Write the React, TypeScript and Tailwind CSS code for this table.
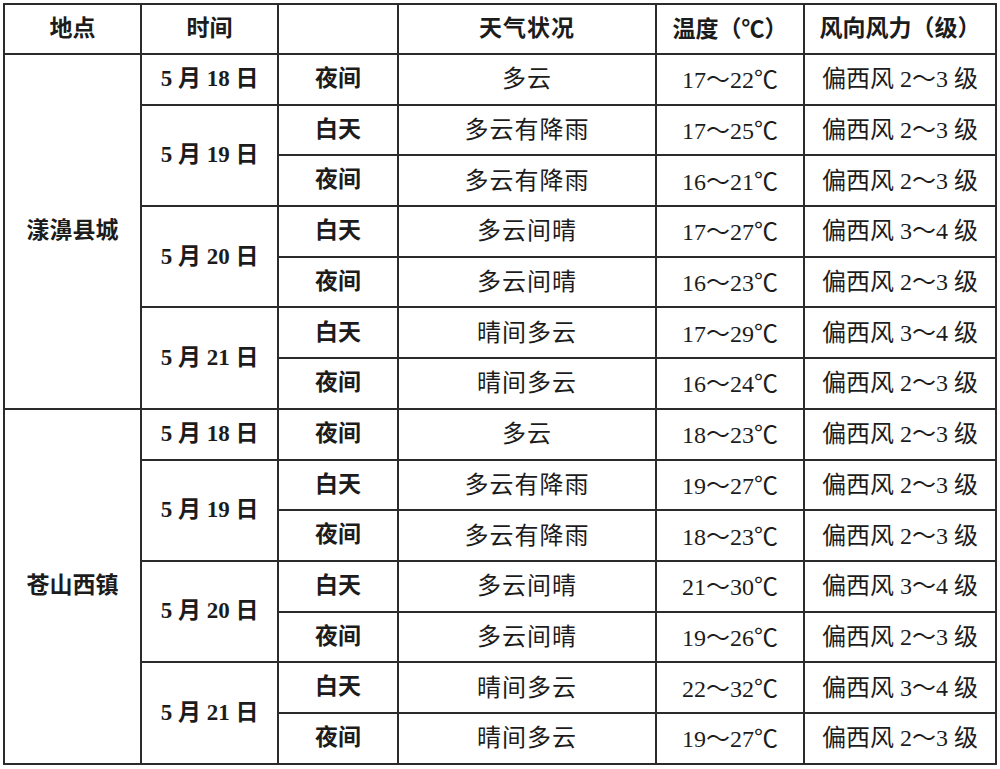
import React from "react";

type Period = { part: string; sky: string; temp: string; wind: string };
type Day = { num: string; periods: Period[] };
type Place = { name: string; days: Day[] };

const places: Place[] = [
    {
        name: "漾濞县城",
        days: [
            { num: "18", periods: [{ part: "夜间", sky: "多云", temp: "17～22", wind: "2～3" }] },
            {
                num: "19",
                periods: [
                    { part: "白天", sky: "多云有降雨", temp: "17～25", wind: "2～3" },
                    { part: "夜间", sky: "多云有降雨", temp: "16～21", wind: "2～3" },
                ],
            },
            {
                num: "20",
                periods: [
                    { part: "白天", sky: "多云间晴", temp: "17～27", wind: "3～4" },
                    { part: "夜间", sky: "多云间晴", temp: "16～23", wind: "2～3" },
                ],
            },
            {
                num: "21",
                periods: [
                    { part: "白天", sky: "晴间多云", temp: "17～29", wind: "3～4" },
                    { part: "夜间", sky: "晴间多云", temp: "16～24", wind: "2～3" },
                ],
            },
        ],
    },
    {
        name: "苍山西镇",
        days: [
            { num: "18", periods: [{ part: "夜间", sky: "多云", temp: "18～23", wind: "2～3" }] },
            {
                num: "19",
                periods: [
                    { part: "白天", sky: "多云有降雨", temp: "19～27", wind: "2～3" },
                    { part: "夜间", sky: "多云有降雨", temp: "18～23", wind: "2～3" },
                ],
            },
            {
                num: "20",
                periods: [
                    { part: "白天", sky: "多云间晴", temp: "21～30", wind: "3～4" },
                    { part: "夜间", sky: "多云间晴", temp: "19～26", wind: "2～3" },
                ],
            },
            {
                num: "21",
                periods: [
                    { part: "白天", sky: "晴间多云", temp: "22～32", wind: "3～4" },
                    { part: "夜间", sky: "晴间多云", temp: "19～27", wind: "2～3" },
                ],
            },
        ],
    },
];

const font = "font-['Liberation_Serif','Noto_Sans_CJK_SC',serif]";
const cjk = "font-['Noto_Sans_CJK_SC',sans-serif]";
const cell = "border-2 border-[#2b2b2b] text-center align-middle p-0";

function Celsius() {
    return <span className={`${cjk} font-normal`}>℃</span>;
}

export default function App() {
    return (
        <div className={`min-h-[769px] bg-white pl-[3px] pt-[3px] text-[#1c1c1c] ${font}`}>
            <table className="table-fixed border-collapse border-2 border-[#1a1a1a]">
                <colgroup>
                    <col className="w-[137px]" />
                    <col className="w-[137px]" />
                    <col className="w-[120px]" />
                    <col className="w-[258px]" />
                    <col className="w-[148px]" />
                    <col className="w-[192px]" />
                </colgroup>
                <thead>
                    <tr className="h-[50px] text-[23px] font-bold">
                        <th className={cell}>地点</th>
                        <th className={cell}>时间</th>
                        <th className={cell}></th>
                        <th className={`${cell} tracking-[1px]`}>天气状况</th>
                        <th className={cell}>
                            温度（<span className={`${cjk} font-bold`}>℃</span>）
                        </th>
                        <th className={cell}>风向风力（级）</th>
                    </tr>
                </thead>
                <tbody>
                    {places.map((place) =>
                        place.days.map((day, di) =>
                            day.periods.map((p, pi) => (
                                <tr key={place.name + day.num + p.part} className="h-[50.7px] text-[24px]">
                                    {di === 0 && pi === 0 && (
                                        <td rowSpan={7} className={`${cell} text-[23px] font-bold`}>
                                            {place.name}
                                        </td>
                                    )}
                                    {pi === 0 && (
                                        <td rowSpan={day.periods.length} className={`${cell} font-bold text-[23px]`}>
                                            5 月 {day.num} 日
                                        </td>
                                    )}
                                    <td className={`${cell} font-bold text-[23px]`}>{p.part}</td>
                                    <td className={`${cell} tracking-[1px]`}>{p.sky}</td>
                                    <td className={cell}>
                                        {p.temp}
                                        <Celsius />
                                    </td>
                                    <td className={cell}>偏西风 {p.wind} 级</td>
                                </tr>
                            ))
                        )
                    )}
                </tbody>
            </table>
        </div>
    );
}
